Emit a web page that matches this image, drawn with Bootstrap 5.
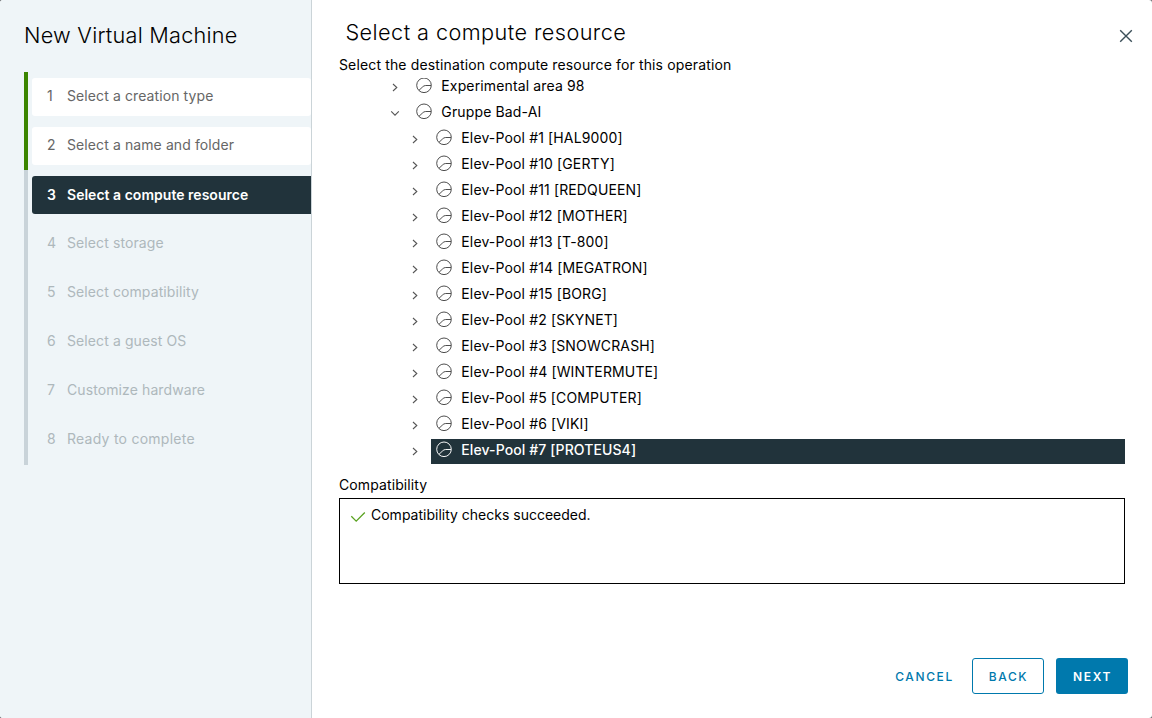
<!DOCTYPE html>
<html lang="en">
<head>
<meta charset="utf-8">
<meta name="viewport" content="width=device-width, initial-scale=1">
<title>New Virtual Machine</title>
<link href="https://cdn.jsdelivr.net/npm/bootstrap@5.3.0/dist/css/bootstrap.min.css" rel="stylesheet">
<style>
body{font-family:Inter,"Liberation Sans",sans-serif;font-size:14px;letter-spacing:.14px;line-height:20px;color:#000;background:#6b6f72}
.wizard{height:718px;border-radius:3px}
.sidebar{width:312px;background:#eff5f8;border-right:1px solid #cbd4d8;padding-left:24px}
.wiz-title,.page-title{font-size:21.7px;font-weight:300;line-height:28px}
.wiz-title{margin:21px 0 23px;letter-spacing:.23px}
.page-title{margin:18px 0 0 6.5px;letter-spacing:.42px}
.step{height:49px;padding:6px 0 5px 4px;border-left:4px solid #c9d3d9;color:#aeb8bc;letter-spacing:.1px}
.step:last-child{height:50px;padding-bottom:6px;letter-spacing:.25px}
.step-box{border-radius:3px;height:38px;padding-left:15px;padding-bottom:2px}
.step-num{width:20px}
.step.done{border-color:#3c8500;color:#666}
.step.done .step-box{background:#fff}
.step.active .step-box{background:#21333b;color:#fff;font-weight:600;letter-spacing:.02px;border-radius:3px 0 0 3px;padding-bottom:1px}
.main{padding:0 27px}
.close-btn{width:14px;height:14px;margin-top:29px;margin-right:-8px}
.intro{margin-top:9px;height:23px;letter-spacing:.14px}
.tree{height:386px}
.tree-row{height:25px;margin-top:1px;flex:none;padding-left:51px}
.tree-row.child{padding-left:71px}
.node{margin-left:2px;padding-left:4px;line-height:22px}
.node svg{margin-right:9.3px;color:#444}
.node.selected{background:#21333b;color:#fff;font-weight:500;letter-spacing:.1px}
.node.selected svg{color:#fff}
.caret-ico{width:10px;height:24px;margin-right:9px}
.compat-label{margin-top:11px;margin-bottom:3px;letter-spacing:.1px}
.outcome{height:86px;border:1px solid #000;padding:6px 10px}
.outcome-text{margin-left:5px;letter-spacing:0}
.wiz-footer{gap:12px;margin-right:-3px;margin-bottom:24px}
.btn-w{height:36px;width:72px;border-radius:3px;font-size:12px;font-weight:500;letter-spacing:1.6px;padding:1px 0 0 1px;color:#0079ad}
.btn-w.outline{border:1px solid #0079ad}
.btn-w.solid,.btn-w.solid:hover{background:#0079ad;color:#fff;font-weight:600}
</style>
<script src="https://cdn.jsdelivr.net/npm/bootstrap@5.3.0/dist/js/bootstrap.bundle.min.js"></script>
</head>
<body>
<svg class="d-none">
  <symbol id="pool" viewBox="0 0 17 25"><g fill="none" stroke="currentColor" stroke-width=".95"><circle cx="9" cy="10.3" r="7.3"/><path d="M3.9 15.4 7.3 12.2Q8.8 10.5 10.7 10.5H16"/></g></symbol>
  <symbol id="right" viewBox="0 0 10 24"><path d="M3 9 6.8 12.5 3 16" fill="none" stroke="#565656" stroke-width="1.1"/></symbol>
  <symbol id="down" viewBox="0 0 10 24"><path d="M1.2 10.3 5 14.1 8.8 10.3" fill="none" stroke="#565656" stroke-width="1.1"/></symbol>
</svg>
<div class="wizard d-flex bg-white overflow-hidden">
  <aside class="sidebar flex-shrink-0">
    <h1 class="wiz-title">New Virtual Machine</h1>
    <div>
      <div class="step done"><div class="step-box d-flex align-items-center"><span class="step-num">1</span>Select a creation type</div></div>
      <div class="step done"><div class="step-box d-flex align-items-center"><span class="step-num">2</span>Select a name and folder</div></div>
      <div class="step active"><div class="step-box d-flex align-items-center"><span class="step-num">3</span>Select a compute resource</div></div>
      <div class="step"><div class="step-box d-flex align-items-center"><span class="step-num">4</span>Select storage</div></div>
      <div class="step"><div class="step-box d-flex align-items-center"><span class="step-num">5</span>Select compatibility</div></div>
      <div class="step"><div class="step-box d-flex align-items-center"><span class="step-num">6</span>Select a guest OS</div></div>
      <div class="step"><div class="step-box d-flex align-items-center"><span class="step-num">7</span>Customize hardware</div></div>
      <div class="step"><div class="step-box d-flex align-items-center"><span class="step-num">8</span>Ready to complete</div></div>
    </div>
  </aside>
  <main class="main flex-grow-1 d-flex flex-column">
    <header class="d-flex justify-content-between align-items-start">
      <h2 class="page-title">Select a compute resource</h2>
      <svg class="close-btn" viewBox="0 0 14 14"><path d="M1.2 1.2 12.8 12.8M12.8 1.2 1.2 12.8" stroke="#3b4f59" stroke-width="1.4"/></svg>
    </header>
    <div class="intro">Select the destination compute resource for this operation</div>
    <div class="tree d-flex flex-column justify-content-end overflow-hidden">
      <div class="tree-row d-flex"><svg class="caret-ico"><use href="#right"/></svg><div class="node flex-grow-1 d-flex align-items-start"><svg width="17" height="25"><use href="#pool"/></svg>Experimental area 98</div></div>
      <div class="tree-row d-flex"><svg class="caret-ico"><use href="#down"/></svg><div class="node flex-grow-1 d-flex align-items-start"><svg width="17" height="25"><use href="#pool"/></svg>Gruppe Bad-AI</div></div>
      <div class="tree-row child d-flex"><svg class="caret-ico"><use href="#right"/></svg><div class="node flex-grow-1 d-flex align-items-start"><svg width="17" height="25"><use href="#pool"/></svg>Elev-Pool #1 [HAL9000]</div></div>
      <div class="tree-row child d-flex"><svg class="caret-ico"><use href="#right"/></svg><div class="node flex-grow-1 d-flex align-items-start"><svg width="17" height="25"><use href="#pool"/></svg>Elev-Pool #10 [GERTY]</div></div>
      <div class="tree-row child d-flex"><svg class="caret-ico"><use href="#right"/></svg><div class="node flex-grow-1 d-flex align-items-start"><svg width="17" height="25"><use href="#pool"/></svg>Elev-Pool #11 [REDQUEEN]</div></div>
      <div class="tree-row child d-flex"><svg class="caret-ico"><use href="#right"/></svg><div class="node flex-grow-1 d-flex align-items-start"><svg width="17" height="25"><use href="#pool"/></svg>Elev-Pool #12 [MOTHER]</div></div>
      <div class="tree-row child d-flex"><svg class="caret-ico"><use href="#right"/></svg><div class="node flex-grow-1 d-flex align-items-start"><svg width="17" height="25"><use href="#pool"/></svg>Elev-Pool #13 [T-800]</div></div>
      <div class="tree-row child d-flex"><svg class="caret-ico"><use href="#right"/></svg><div class="node flex-grow-1 d-flex align-items-start"><svg width="17" height="25"><use href="#pool"/></svg>Elev-Pool #14 [MEGATRON]</div></div>
      <div class="tree-row child d-flex"><svg class="caret-ico"><use href="#right"/></svg><div class="node flex-grow-1 d-flex align-items-start"><svg width="17" height="25"><use href="#pool"/></svg>Elev-Pool #15 [BORG]</div></div>
      <div class="tree-row child d-flex"><svg class="caret-ico"><use href="#right"/></svg><div class="node flex-grow-1 d-flex align-items-start"><svg width="17" height="25"><use href="#pool"/></svg>Elev-Pool #2 [SKYNET]</div></div>
      <div class="tree-row child d-flex"><svg class="caret-ico"><use href="#right"/></svg><div class="node flex-grow-1 d-flex align-items-start"><svg width="17" height="25"><use href="#pool"/></svg>Elev-Pool #3 [SNOWCRASH]</div></div>
      <div class="tree-row child d-flex"><svg class="caret-ico"><use href="#right"/></svg><div class="node flex-grow-1 d-flex align-items-start"><svg width="17" height="25"><use href="#pool"/></svg>Elev-Pool #4 [WINTERMUTE]</div></div>
      <div class="tree-row child d-flex"><svg class="caret-ico"><use href="#right"/></svg><div class="node flex-grow-1 d-flex align-items-start"><svg width="17" height="25"><use href="#pool"/></svg>Elev-Pool #5 [COMPUTER]</div></div>
      <div class="tree-row child d-flex"><svg class="caret-ico"><use href="#right"/></svg><div class="node flex-grow-1 d-flex align-items-start"><svg width="17" height="25"><use href="#pool"/></svg>Elev-Pool #6 [VIKI]</div></div>
      <div class="tree-row child d-flex"><svg class="caret-ico"><use href="#right"/></svg><div class="node selected flex-grow-1 d-flex align-items-start"><svg width="17" height="25"><use href="#pool"/></svg>Elev-Pool #7 [PROTEUS4]</div></div>
    </div>
    <div class="compat-label">Compatibility</div>
    <div class="outcome d-flex align-items-start"><svg width="16" height="20" viewBox="0 0 16 20"><path d="M1.3 11.3 6.2 16.1 14.8 7.5" fill="none" stroke="#5aa220" stroke-width="1.3"/></svg><span class="outcome-text">Compatibility checks succeeded.</span></div>
    <footer class="wiz-footer d-flex justify-content-end mt-auto">
      <button class="btn btn-w">CANCEL</button>
      <button class="btn btn-w outline">BACK</button>
      <button class="btn btn-w solid">NEXT</button>
    </footer>
  </main>
</div>
</body>
</html>
